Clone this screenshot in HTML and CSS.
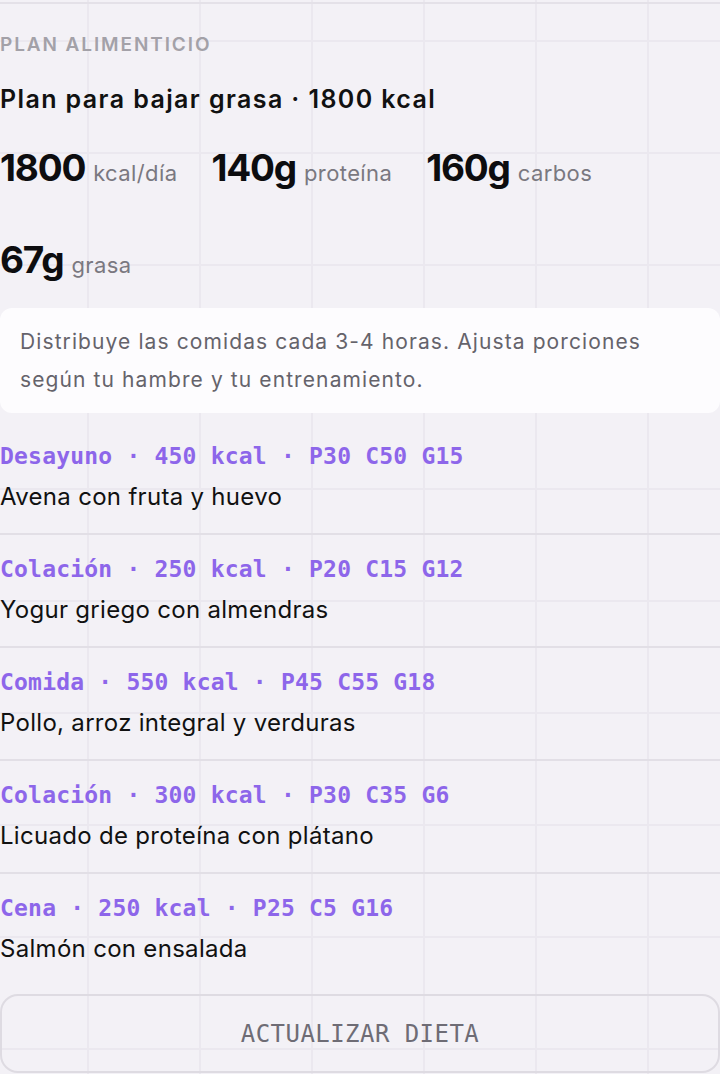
FILE: index.html
```
<!DOCTYPE html>
<html lang="es">
<head>
    <meta charset="UTF-8">
    <meta name="viewport" content="width=device-width, initial-scale=1.0">
    <title>Plan alimenticio</title>
    <link rel="stylesheet" href="styles.css">
</head>
<body>
    <div class="plan">
        <div class="eyebrow">PLAN ALIMENTICIO</div>
        <h2 class="title">Plan para bajar grasa · 1800 kcal</h2>

        <div class="stats">
            <div class="stat"><span class="value">1800</span><span class="unit">kcal/día</span></div>
            <div class="stat"><span class="value">140g</span><span class="unit">proteína</span></div>
            <div class="stat"><span class="value">160g</span><span class="unit">carbos</span></div>
            <div class="stat"><span class="value">67g</span><span class="unit">grasa</span></div>
        </div>

        <div class="note">
            Distribuye las comidas cada 3-4 horas. Ajusta porciones según tu hambre y tu entrenamiento.
        </div>

        <div class="meals">
            <div class="meal">
                <div class="meal-head">Desayuno · 450 kcal · P30 C50 G15</div>
                <div class="meal-desc">Avena con fruta y huevo</div>
            </div>
            <div class="meal">
                <div class="meal-head">Colación · 250 kcal · P20 C15 G12</div>
                <div class="meal-desc">Yogur griego con almendras</div>
            </div>
            <div class="meal">
                <div class="meal-head">Comida · 550 kcal · P45 C55 G18</div>
                <div class="meal-desc">Pollo, arroz integral y verduras</div>
            </div>
            <div class="meal">
                <div class="meal-head">Colación · 300 kcal · P30 C35 G6</div>
                <div class="meal-desc">Licuado de proteína con plátano</div>
            </div>
            <div class="meal">
                <div class="meal-head">Cena · 250 kcal · P25 C5 G16</div>
                <div class="meal-desc">Salmón con ensalada</div>
            </div>
        </div>

        <button class="update-btn">ACTUALIZAR DIETA</button>
    </div>
</body>
</html>
```

FILE: styles.css
```
html, body {
    margin: 0;
    padding: 0;
}

body {
    min-height: 100vh;
    font-family: Inter, "Noto Sans", sans-serif;
    color: #111;
    background-color: #f3f1f6;
    background-image:
        linear-gradient(to right, #ebe8ef 2px, transparent 2px),
        linear-gradient(to bottom, #ebe8ef 2px, transparent 2px);
    background-size: 112px 112px;
    background-position: 87px 40px;
}

.plan {
    margin-top: 2px;
    border-top: 2px solid #e4e1e8;
    padding-top: 29px;
}

.eyebrow {
    font-size: 19px;
    line-height: 24px;
    font-weight: 600;
    letter-spacing: 1.9px;
    color: #a3a1a8;
}

.title {
    margin: 26px 0 0;
    font-size: 25px;
    line-height: 32px;
    font-weight: 600;
    letter-spacing: 1.4px;
    color: #111;
}

.stats {
    display: flex;
    flex-wrap: wrap;
    column-gap: 34px;
    row-gap: 44px;
    margin-top: 29px;
}

.stat {
    display: flex;
    align-items: baseline;
    gap: 8px;
    height: 48px;
    line-height: 48px;
}

.value {
    font-size: 37px;
    font-weight: 700;
    letter-spacing: -1.2px;
    color: #0d0d0f;
}

.unit {
    font-size: 22px;
    letter-spacing: 0.4px;
    color: #7a7880;
}

.note {
    margin-top: 24px;
    padding: 15px 24px 14px 20px;
    background: #fdfcfe;
    border-radius: 12px;
    font-size: 21px;
    line-height: 38px;
    letter-spacing: 1.1px;
    color: #65636b;
}

.meals {
    margin-top: 9px;
}

.meal {
    padding: 19px 0 21px;
    border-bottom: 2px solid #e2dfe6;
}

.meal:last-child {
    border-bottom: none;
}

.meal-head {
    font-family: "DejaVu Sans Mono", "Liberation Mono", monospace;
    font-weight: bold;
    font-size: 23px;
    line-height: 30px;
    letter-spacing: 0.2px;
    color: #8d66ea;
}

.meal-desc {
    margin-top: 11px;
    font-size: 24px;
    line-height: 30px;
    letter-spacing: 0.3px;
    color: #111;
}

.update-btn {
    display: block;
    width: 100%;
    height: 79px;
    margin-top: 9px;
    background: transparent;
    border: 2px solid #dedbe2;
    border-radius: 18px;
    font-family: "DejaVu Sans Mono", "Liberation Mono", monospace;
    font-size: 24px;
    letter-spacing: 0.45px;
    color: #6e6c75;
    cursor: pointer;
}
```
